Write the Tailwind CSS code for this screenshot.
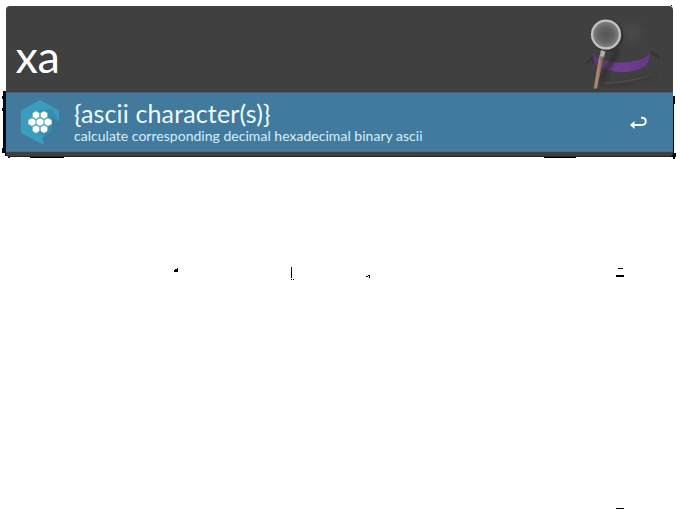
<!DOCTYPE html>
<html lang="en">
<head>
<meta charset="utf-8">
<title>Launcher</title>
<script src="https://cdn.jsdelivr.net/npm/@tailwindcss/browser@4"></script>
</head>
<body class="relative h-[530px] w-[680px] overflow-hidden bg-white font-[Lato,sans-serif]">
<svg class="absolute inset-0" width="680" height="530" viewBox="0 0 680 530" fill="#000" shape-rendering="crispEdges" aria-hidden="true">
  <path fill="#020718" d="M3 91h4v65h3v2H8v-2H5v-3H2v-5h1v-37H2v-3h1V99H2v-3h1z"/>
  <path d="M672 96h3v8h-1v49h2v4h-1v2h-2v-2h-3v-3h2zM30 156h34v2H30zM544 156h32v2h-32zM656 156h15v1h-15zM671 5h1v1h-1z"/>
  <path d="M174 270h1v-1h2v-1h1v4h-4zM291 267h1v11h-1zM291 279h1v1h-1zM293 279h1v1h-1zM366 276h2v-1h2v3h-1v-2h-1v1h-2zM618 268h5v1h-5zM616 275h8v2h-8zM616 508h8v1h-8z"/>
</svg>
<main class="relative ml-1.5 mt-1.5 flex h-[151px] w-[667px] flex-col overflow-hidden rounded-[4px] border-b border-[#242424] bg-[#404040] text-white">
  <header class="flex h-[86px] shrink-0 items-start justify-between">
    <div class="ml-[9.500px] mt-[25px] text-[45px] leading-[50px] tracking-[-0.3px]">xa</div>
    <svg class="h-[86px] w-[97px]" viewBox="576 6 97 86" fill="none" aria-hidden="true">
      <defs>
        <filter id="soft" x="-30%" y="-30%" width="160%" height="160%"><feGaussianBlur stdDeviation="2"/></filter>
        <filter id="fine" x="-30%" y="-30%" width="160%" height="160%"><feGaussianBlur stdDeviation=".5"/></filter>
        <radialGradient id="lens"><stop stop-color="#555"/><stop offset=".55" stop-color="#646464"/><stop offset="1" stop-color="#868686"/></radialGradient>
        <radialGradient id="shine"><stop stop-color="#4b4b4b"/><stop offset="1" stop-color="#404040"/></radialGradient>
        <linearGradient id="band"><stop stop-color="#55366c"/><stop offset=".4" stop-color="#703f94"/><stop offset="1" stop-color="#673787"/></linearGradient>
        <linearGradient id="wood" x1="0" x2="1" y1="0" y2=".3"><stop stop-color="#6b4839"/><stop offset=".5" stop-color="#b08b77"/><stop offset="1" stop-color="#68483b"/></linearGradient>
      </defs>
      <circle cx="632" cy="33" r="14" fill="url(#shine)"/>
      <path d="M587 63l5-5 1 5M651 52q5 1 7 5-3-2-6-3" stroke="#343434" stroke-width="2" filter="url(#fine)"/>
      <path d="M604 85q30-1 50-10" stroke="#343434" stroke-width="3" filter="url(#soft)"/>
      <path d="M604 84q28-1 49-10" stroke="#494745" stroke-width="1" filter="url(#fine)"/>
      <path d="M604 83q22-1 42-6" stroke="#504d4b" stroke-width="1" filter="url(#fine)"/>
      <path d="M593 52q4 8 13 9 14 3 28 0 11-2 15-7 1 8-4 12-10 6-23 6-14 0-26-7-4-5-3-13z" fill="url(#band)" filter="url(#fine)"/>
      <path d="M616 48q0 11-9 20l-5 14" stroke="#292929" stroke-width="5" opacity=".75" filter="url(#soft)"/>
      <path d="M599.500 55l4.500 1-7 32q-2 1.500-3.500 0z" fill="url(#wood)" filter="url(#fine)"/>
      <path d="M601 49h5l-2 8-4-1z" fill="#b1b1b1"/>
      <circle cx="607.500" cy="35.500" r="15" stroke="#333" stroke-width="2" filter="url(#fine)"/>
      <circle cx="606" cy="34.500" r="13.900" fill="url(#lens)" stroke="#c1c1c1" stroke-width="2.300"/>
    </svg>
  </header>
  <section class="flex h-[60px] shrink-0 items-start border-y border-[#436278] border-b-[#4b7082] bg-[#427a9e]">
    <svg class="ml-[14px] mt-[6px] h-[46px] w-[40px] shrink-0" viewBox="20 99 40 46" aria-hidden="true">
      <path fill="#3b9dbd" d="M40 100l19 10.500v11L53 117l-1 15-10 7 2 4-2 1-21-11v-22.500z"/>
      <path fill="#348ead" d="M31 112l21-3 7 12v1l-6-4v13l-9 5-9-7z"/>
      <path fill="#3d7b9e" d="M42 138l10-7v-14l7 6v10l-14 9z"/>
      <g fill="#fff" stroke="#6eafc7" stroke-width=".55">
        <path d="M36 111l3.500 2v4l-3.500 2.200-3.500-2.200v-4zM44 111l3.500 2v4l-3.500 2.200-3.500-2.200v-4zM32 118l3.800 2v4l-3.800 2.200-3.800-2.200v-4zM40 118l3.800 2v4l-3.800 2.200-3.800-2.200v-4zM48 118l3.800 2v4l-3.800 2.200-3.800-2.200v-4zM36 125l3.500 2v4l-3.500 2.200-3.500-2.200v-4zM44 125l3.500 2v4l-3.500 2.200-3.500-2.200v-4z" stroke-linejoin="round"/>
      </g>
    </svg>
    <div class="ml-[14px] mt-[5px] flex-1 whitespace-nowrap">
      <div class="text-[25px] leading-[30px] tracking-[0.14px] text-[#edfcff]">{ascii character(s)}</div>
      <div class="text-[14px] leading-[16px] tracking-[0.025px] text-[#d4efff]">calculate corresponding decimal hexadecimal binary ascii</div>
    </div>
    <svg class="mr-[25px] mt-[22px] h-[16px] w-[20px] shrink-0" viewBox="628 115 20 16" fill="none" aria-hidden="true">
      <path d="M641 117.700h1c5 0 5 7.300 0 7.300H634" stroke="#f3fcff" stroke-width="1.900"/>
      <path d="M630 125l4.500-4v8z" fill="#f3fcff"/>
    </svg>
  </section>
</main>
</body>
</html>
